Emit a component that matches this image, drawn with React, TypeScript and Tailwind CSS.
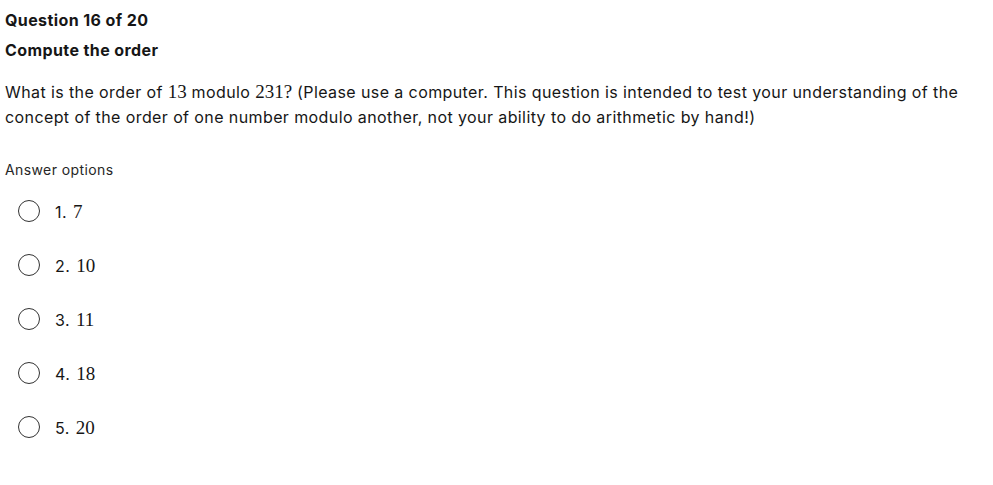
import React from "react";

const sans = { fontFamily: 'Inter, "Noto Sans", sans-serif' };
const serif = { fontFamily: '"Liberation Serif", "DejaVu Serif", serif' };

const options = ["7", "10", "11", "18", "20"];

export default function App() {
  return (
    <div className="min-h-[485px] bg-white text-[#161616] px-[5px] pt-[10px] tracking-[0.025em]" style={sans}>
      <div className="text-[16px] font-bold leading-[20px]">Question 16 of 20</div>
      <div className="text-[16px] font-bold leading-[20px] mt-[10px]">Compute the order</div>
      <p className="text-[16px] leading-[25px] mt-[20px] max-w-[975px]">
        What is the order of <span className="text-[19px] leading-none tracking-normal" style={serif}>13</span> modulo{" "}
        <span className="text-[19px] leading-none tracking-normal" style={serif}>231?</span> (Please use a computer. This question is intended to test your understanding of the concept of the order of one number modulo another, not your ability to do arithmetic by hand!)
      </p>
      <div className="text-[14px] leading-[18px] mt-[31px] text-[#262626]">Answer options</div>
      <div className="flex flex-col mt-[21px] gap-[32px]">
        {options.map((o, i) => (
          <label key={i} className="flex items-center h-[22px]">
            <span className="ml-[13px] w-[22px] h-[22px] rounded-full border-[1.5px] border-[#333]" />
            <span className="ml-[15px] flex items-baseline gap-[6px]">
              <span className="text-[16px] leading-none">{i + 1}.</span>
              <span className="text-[19px] leading-none tracking-normal" style={serif}>{o}</span>
            </span>
          </label>
        ))}
      </div>
    </div>
  );
}
